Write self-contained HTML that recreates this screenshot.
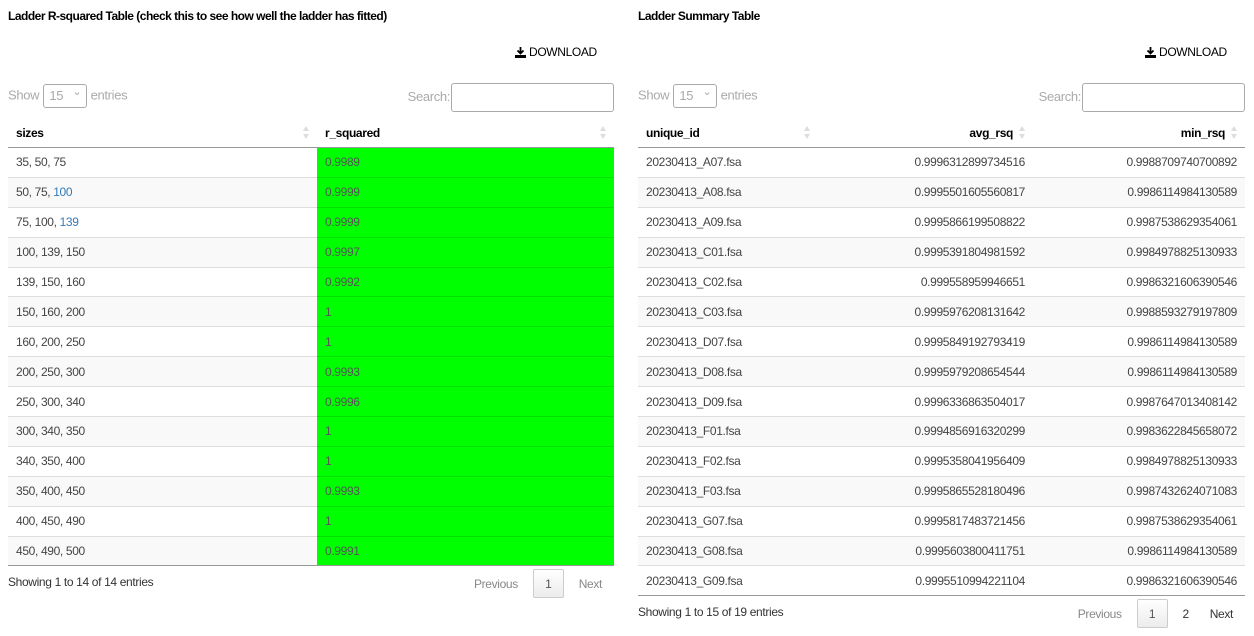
<!DOCTYPE html>
<html><head><meta charset="utf-8"><style>
body{margin:0;width:1254px;height:636px;background:#fff;font-family:"Liberation Sans Narrow","Liberation Sans",sans-serif;font-size:12px;letter-spacing:-0.35px;color:#444;position:relative;overflow:hidden}
.panel{position:absolute;top:0}
h4{position:absolute;top:9px;left:0;margin:0;font-size:12px;font-weight:bold;color:#000;white-space:nowrap;letter-spacing:-0.5px}
.dl{position:absolute;top:45px;font-size:12px;color:#000;white-space:nowrap}
.dl svg{vertical-align:-2px;margin-right:3px}
.show{position:absolute;top:84px;left:0;color:#aaa;font-size:13px;white-space:nowrap}
.sel{display:inline-block;width:44px;height:24px;border:1px solid #aaa;border-radius:3px;vertical-align:middle;box-sizing:border-box;padding:3px 5px;color:#aaa;position:relative;margin:0 0 0 1px}
.sel:after{content:"⌄";position:absolute;right:5px;top:0;font-size:11px}
.search{position:absolute;top:83px;color:#aaa;font-size:13px;white-space:nowrap}
.search span{display:inline-block;width:163px;height:29px;border:1px solid #aaa;border-radius:3px;vertical-align:middle;box-sizing:border-box;margin-left:1px}
table{position:absolute;top:118px;left:0;border-collapse:collapse;table-layout:fixed}
th{height:29px;font-weight:bold;text-align:left;padding:0 8px;border-bottom:1px solid #999;color:#000;position:relative}
th:after{content:"";position:absolute;right:8px;top:8px;width:0;height:0;border-left:3px solid transparent;border-right:3px solid transparent;border-bottom:5px solid #ddd}
th:before{content:"";position:absolute;right:8px;top:16px;width:0;height:0;border-left:3px solid transparent;border-right:3px solid transparent;border-top:5px solid #ddd}
td{height:28.9px;padding:0 8px;border-top:1px solid #ddd;white-space:nowrap}
tr:nth-child(odd) td{background:#f9f9f9}
tr:nth-child(2) td{border-top:none}
td.g{background:#00ff00 !important;border-top-color:#00e000;color:#555}
tr:last-child td{border-bottom:1px solid #999}
.r{text-align:right}
.info{position:absolute;left:0;white-space:nowrap;color:#333}
.pg{position:absolute;white-space:nowrap;color:#888}
.pg .b{display:inline-block;width:31px;height:29px;border:1px solid #ccc;border-radius:2px;background:linear-gradient(#fff,#ececec);text-align:center;line-height:28px;box-sizing:border-box;color:#555}
</style></head><body>
<div class="panel" style="left:8px;width:606px">
<h4>Ladder R-squared Table (check this to see how well the ladder has fitted)</h4>
<div class="dl" style="left:507px"><svg width="11" height="11" viewBox="0 0 11 11"><path d="M5.5 0v6M2.5 3.5l3 3 3-3" stroke="#000" stroke-width="1.8" fill="none"/><path d="M0 8h11v3H0z" fill="#000"/></svg>DOWNLOAD</div>
<div class="show">Show <span class="sel">15</span> entries</div>
<div class="search" style="right:0">Search:<span></span></div>
<table style="width:606px"><colgroup><col style="width:309px"><col style="width:297px"></colgroup>
<tr><th>sizes</th><th>r_squared</th></tr>
<tr><td>35, 50, 75</td><td class="g">0.9989</td></tr>
<tr><td>50, 75, <span style="color:#337ab7">100</span></td><td class="g">0.9999</td></tr>
<tr><td>75, 100, <span style="color:#337ab7">139</span></td><td class="g">0.9999</td></tr>
<tr><td>100, 139, 150</td><td class="g">0.9997</td></tr>
<tr><td>139, 150, 160</td><td class="g">0.9992</td></tr>
<tr><td>150, 160, 200</td><td class="g">1</td></tr>
<tr><td>160, 200, 250</td><td class="g">1</td></tr>
<tr><td>200, 250, 300</td><td class="g">0.9993</td></tr>
<tr><td>250, 300, 340</td><td class="g">0.9996</td></tr>
<tr><td>300, 340, 350</td><td class="g">1</td></tr>
<tr><td>340, 350, 400</td><td class="g">1</td></tr>
<tr><td>350, 400, 450</td><td class="g">0.9993</td></tr>
<tr><td>400, 450, 490</td><td class="g">1</td></tr>
<tr><td>450, 490, 500</td><td class="g">0.9991</td></tr>
</table>
<div class="info" style="top:575px">Showing 1 to 14 of 14 entries</div>
<div class="pg" style="right:12px;top:569px">Previous&nbsp;&nbsp;&nbsp;&nbsp;&nbsp;<span class="b">1</span>&nbsp;&nbsp;&nbsp;&nbsp;&nbsp;Next</div>
</div>
<div class="panel" style="left:638px;width:607px">
<h4>Ladder Summary Table</h4>
<div class="dl" style="left:507px"><svg width="11" height="11" viewBox="0 0 11 11"><path d="M5.5 0v6M2.5 3.5l3 3 3-3" stroke="#000" stroke-width="1.8" fill="none"/><path d="M0 8h11v3H0z" fill="#000"/></svg>DOWNLOAD</div>
<div class="show">Show <span class="sel">15</span> entries</div>
<div class="search" style="right:0">Search:<span></span></div>
<table style="width:607px"><colgroup><col style="width:180px"><col style="width:215px"><col style="width:212px"></colgroup>
<tr><th>unique_id</th><th class="r" style="padding-right:20px">avg_rsq</th><th class="r" style="padding-right:20px">min_rsq</th></tr>
<tr><td>20230413_A07.fsa</td><td class="r">0.9996312899734516</td><td class="r">0.9988709740700892</td></tr>
<tr><td>20230413_A08.fsa</td><td class="r">0.9995501605560817</td><td class="r">0.9986114984130589</td></tr>
<tr><td>20230413_A09.fsa</td><td class="r">0.9995866199508822</td><td class="r">0.9987538629354061</td></tr>
<tr><td>20230413_C01.fsa</td><td class="r">0.9995391804981592</td><td class="r">0.9984978825130933</td></tr>
<tr><td>20230413_C02.fsa</td><td class="r">0.999558959946651</td><td class="r">0.9986321606390546</td></tr>
<tr><td>20230413_C03.fsa</td><td class="r">0.9995976208131642</td><td class="r">0.9988593279197809</td></tr>
<tr><td>20230413_D07.fsa</td><td class="r">0.9995849192793419</td><td class="r">0.9986114984130589</td></tr>
<tr><td>20230413_D08.fsa</td><td class="r">0.9995979208654544</td><td class="r">0.9986114984130589</td></tr>
<tr><td>20230413_D09.fsa</td><td class="r">0.9996336863504017</td><td class="r">0.9987647013408142</td></tr>
<tr><td>20230413_F01.fsa</td><td class="r">0.9994856916320299</td><td class="r">0.9983622845658072</td></tr>
<tr><td>20230413_F02.fsa</td><td class="r">0.9995358041956409</td><td class="r">0.9984978825130933</td></tr>
<tr><td>20230413_F03.fsa</td><td class="r">0.9995865528180496</td><td class="r">0.9987432624071083</td></tr>
<tr><td>20230413_G07.fsa</td><td class="r">0.9995817483721456</td><td class="r">0.9987538629354061</td></tr>
<tr><td>20230413_G08.fsa</td><td class="r">0.9995603800411751</td><td class="r">0.9986114984130589</td></tr>
<tr><td>20230413_G09.fsa</td><td class="r">0.9995510994221104</td><td class="r">0.9986321606390546</td></tr>
</table>
<div class="info" style="top:605px">Showing 1 to 15 of 19 entries</div>
<div class="pg" style="right:12px;top:599px">Previous&nbsp;&nbsp;&nbsp;&nbsp;&nbsp;<span class="b">1</span>&nbsp;&nbsp;&nbsp;&nbsp;&nbsp;<span style="color:#333">2</span>&nbsp;&nbsp;&nbsp;&nbsp;&nbsp;&nbsp;&nbsp;<span style="color:#333">Next</span></div>
</div>
</body></html>
